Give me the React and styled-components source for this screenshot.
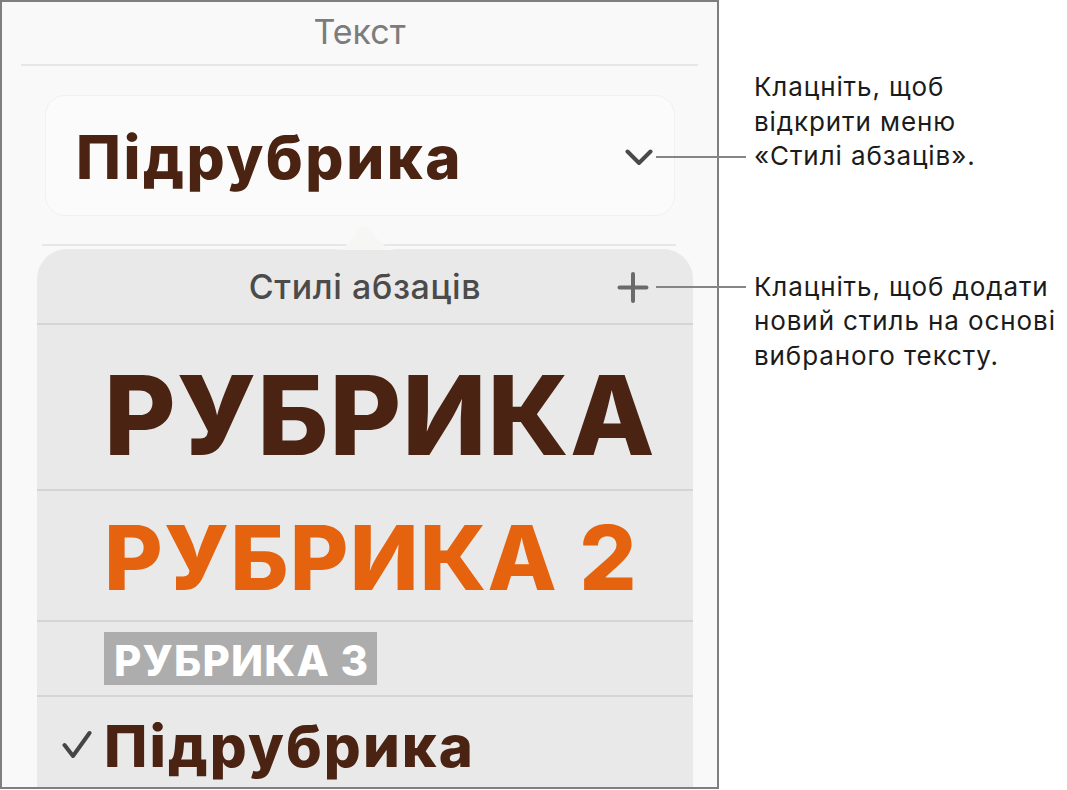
import React from "react";
import styled, { createGlobalStyle } from "styled-components";

const Global = createGlobalStyle`
  html, body { margin: 0; padding: 0; background: #ffffff; }
  #root { width: 1067px; height: 790px; }
`;

const Page = styled.div`
  position: relative;
  display: flex;
  width: 1067px;
  height: 790px;
  overflow: hidden;
`;

const Panel = styled.div`
  box-sizing: border-box;
  width: 719px;
  height: 789px;
  border: 2px solid #7f7f7f;
  background: #f9f9f9;
  display: flex;
  flex-direction: column;
  overflow: hidden;
  flex-shrink: 0;
`;

const PanelTitle = styled.div`
  font-family: "Inter", "Roboto", sans-serif;
  font-weight: 400;
  font-size: 34px;
  line-height: 40px;
  color: #7c7c7c;
  text-align: center;
  padding-top: 10px;
  box-sizing: border-box;
  height: 62px;
`;

const Rule = styled.div`
  height: 2px;
  background: #e7e7e7;
  margin: ${(p) => p.$top || 0}px ${(p) => p.$right}px 0 ${(p) => p.$left}px;
  flex-shrink: 0;
`;

const StyleCard = styled.div`
  box-sizing: border-box;
  margin: 29px 42px 0 43px;
  height: 121px;
  border-radius: 20px;
  background: #fbfbfb;
  border: 1px solid #f1f1f1;
  display: flex;
  align-items: center;
  justify-content: space-between;
  padding: 3px 21px 0 30px;
  flex-shrink: 0;
`;

const BoldLabel = styled.span`
  font-family: "Inter", "Liberation Sans", sans-serif;
  font-weight: 800;
  font-size: ${(p) => p.$size}px;
  line-height: 1;
  letter-spacing: ${(p) => p.$track || 0}px;
  color: ${(p) => p.$color || "#4a2312"};
  white-space: nowrap;
`;

const Popover = styled.div`
  position: relative;
  margin: 3px 24px 0 35px;
  flex: 1;
  background: #e9e9e9;
  border-radius: 30px 30px 0 0;
  display: flex;
  flex-direction: column;
`;

const PopArrow = styled.svg`
  position: absolute;
  left: 296px;
  top: -26px;
  width: 64px;
  height: 27px;
`;

const PopHeader = styled.div`
  display: grid;
  grid-template-columns: 1fr auto 1fr;
  align-items: center;
  height: 74px;
  padding-right: 44px;
  padding-left: 44px;
  border-bottom: 2px solid #d5d5d5;
`;

const PopTitle = styled.div`
  grid-column: 2;
  font-family: "Inter", "Roboto", sans-serif;
  font-weight: 500;
  font-size: 34px;
  line-height: 40px;
  letter-spacing: 0.6px;
  color: #4b4b4b;
  padding-top: 2px;
`;

const AddButton = styled.svg`
  grid-column: 3;
  justify-self: end;
  width: 32px;
  height: 31px;
  margin-top: 2px;
`;

const StyleRow = styled.div`
  box-sizing: border-box;
  height: ${(p) => (p.$h ? `${p.$h}px` : "auto")};
  flex: ${(p) => (p.$h ? "none" : "1")};
  padding: ${(p) => p.$pt}px 0 0 ${(p) => p.$pl || 67}px;
  border-bottom: ${(p) => (p.$last ? "none" : "2px solid #d5d5d5")};
  display: flex;
  align-items: flex-start;
`;

const TagLabel = styled.span`
  font-family: "Inter", "Liberation Sans", sans-serif;
  font-weight: 800;
  font-size: 42px;
  line-height: 49px;
  letter-spacing: 1.2px;
  height: 53px;
  box-sizing: border-box;
  padding: 4px 8px 0 10px;
  color: #ffffff;
  background: #adadad;
  white-space: nowrap;
`;

const Check = styled.svg`
  width: 30px;
  height: 30px;
  margin: 13px 12px 0 0;
  flex-shrink: 0;
`;

const Notes = styled.div`
  margin-left: 35px;
  padding-top: 70px;
  display: flex;
  flex-direction: column;
`;

const Note = styled.p`
  margin: ${(p) => p.$gap || 0}px 0 0 0;
  font-family: "Inter", "Roboto", sans-serif;
  font-size: 26px;
  line-height: 34.5px;
  letter-spacing: 0.9px;
  color: #1b1b1b;
  white-space: nowrap;
`;

const Leader = styled.div`
  position: absolute;
  left: 656px;
  width: 90px;
  height: 2px;
  top: ${(p) => p.$top}px;
  background: #858585;
`;

export default function App() {
  return (
    <>
      <Global />
      <Page>
        <Panel>
          <PanelTitle>Текст</PanelTitle>
          <Rule $left={19} $right={19} />
          <StyleCard>
            <BoldLabel $size={60} $track={2.5}>Підрубрика</BoldLabel>
            <svg width="28" height="17" viewBox="0 0 28 17">
              <path
                d="M2.5 2.5 L14 14 L25.5 2.5"
                fill="none"
                stroke="#4a4a4a"
                strokeWidth="4"
                strokeLinecap="round"
                strokeLinejoin="round"
              />
            </svg>
          </StyleCard>
          <Rule $top={28} $left={40} $right={41} />
          <Popover>
            <PopArrow viewBox="0 0 64 27">
              <path
                d="M0 27 C12 27 20 16 26 7 Q32 -1 38 7 C44 16 52 27 64 27 Z"
                fill="#f6f6f4"
              />
            </PopArrow>
            <PopHeader>
              <PopTitle>Стилі абзаців</PopTitle>
              <AddButton viewBox="0 0 32 31">
                <path
                  d="M2.5 15.5 H29.5 M16 2 V29"
                  fill="none"
                  stroke="#6a6a6a"
                  strokeWidth="4"
                  strokeLinecap="round"
                />
              </AddButton>
            </PopHeader>
            <StyleRow $h={166} $pt={35}>
              <BoldLabel $size={110} $track={1.1}>РУБРИКА</BoldLabel>
            </StyleRow>
            <StyleRow $h={131} $pt={22}>
              <BoldLabel $size={90} $track={1.3} $color="#e5620e">РУБРИКА 2</BoldLabel>
            </StyleRow>
            <StyleRow $h={75} $pt={10}>
              <TagLabel>РУБРИКА 3</TagLabel>
            </StyleRow>
            <StyleRow $pt={20} $pl={25} $last>
              <Check viewBox="0 0 30 30">
                <path
                  d="M2.5 15 L11 26 L27.5 3"
                  fill="none"
                  stroke="#454545"
                  strokeWidth="4"
                  strokeLinecap="round"
                  strokeLinejoin="round"
                />
              </Check>
              <BoldLabel $size={58} $track={2.1}>Підрубрика</BoldLabel>
            </StyleRow>
          </Popover>
        </Panel>
        <Notes>
          <Note>
            Клацніть, щоб
            <br />
            відкрити меню
            <br />
            «Стилі абзаців».
          </Note>
          <Note $gap={96}>
            Клацніть, щоб додати
            <br />
            новий стиль на основі
            <br />
            вибраного тексту.
          </Note>
        </Notes>
        <Leader $top={156} />
        <Leader $top={286} />
      </Page>
    </>
  );
}
